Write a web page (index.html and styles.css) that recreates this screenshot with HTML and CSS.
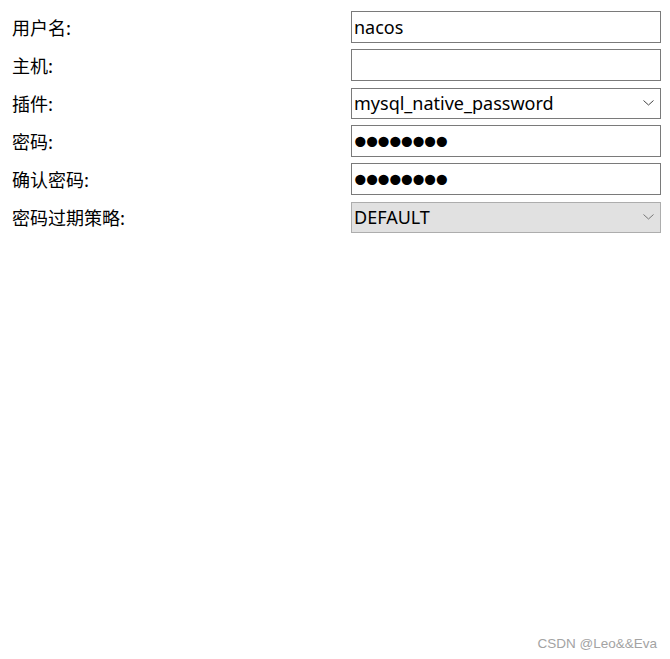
FILE: index.html
```html
<!DOCTYPE html>
<html lang="zh-CN">
<head>
    <meta charset="UTF-8">
    <meta name="viewport" content="width=device-width, initial-scale=1.0">
    <title>用户账户</title>
    <link rel="stylesheet" href="styles.css">
</head>
<body>
    <div class="page">
        <form class="account-form">
            <label class="label" for="user">用户名:</label>
            <input class="field" id="user" type="text" value="nacos">

            <label class="label" for="host">主机:</label>
            <input class="field" id="host" type="text" value="">

            <label class="label" for="plugin">插件:</label>
            <div class="select-wrap">
                <select class="field select" id="plugin">
                    <option>mysql_native_password</option>
                    <option>caching_sha2_password</option>
                </select>
                <svg class="chevron" width="11" height="6" viewBox="0 0 11 6"><path d="M0.5 0.5 L5.5 5 L10.5 0.5" fill="none" stroke="#444" stroke-width="1"/></svg>
            </div>

            <label class="label" for="pwd">密码:</label>
            <input class="field pwd" id="pwd" type="password" value="12345678">

            <label class="label" for="pwd2">确认密码:</label>
            <input class="field pwd" id="pwd2" type="password" value="12345678">

            <label class="label" for="expire">密码过期策略:</label>
            <div class="select-wrap">
                <select class="field select disabled" id="expire" disabled>
                    <option>DEFAULT</option>
                </select>
                <svg class="chevron" width="11" height="6" viewBox="0 0 11 6"><path d="M0.5 0.5 L5.5 5 L10.5 0.5" fill="none" stroke="#777" stroke-width="1"/></svg>
            </div>
        </form>

        <div class="watermark">CSDN @Leo&amp;&amp;Eva</div>
    </div>
</body>
</html>
```

FILE: styles.css
```css
html, body { margin: 0; padding: 0; background: #fff; }
body { font-family: "Noto Sans", "Noto Sans CJK SC", sans-serif; color: #000; }

.page { height: 659px; display: flex; flex-direction: column; box-sizing: border-box; padding: 11px 9px 8px 12px; }

.account-form { display: grid; grid-template-columns: 339px 310px; row-gap: 6px; align-items: center; }

.label { font-family: "Noto Sans CJK SC", sans-serif; font-size: 18px; line-height: 32px; }

.field { box-sizing: border-box; width: 310px; height: 32px; margin: 0; padding: 0 2px; border: 1px solid #7a7a7a; border-radius: 0; background: #fff; font-family: "Noto Sans", "Open Sans", sans-serif; font-size: 18px; color: #000; outline: none; }

.select-wrap { position: relative; width: 310px; height: 31px; }
.select { height: 31px; appearance: none; -webkit-appearance: none; padding-left: 2px; }
.select.disabled { background: #e1e1e1; border-color: #adadad; color: #000; opacity: 1; }
.chevron { position: absolute; right: 7px; top: 12px; pointer-events: none; }

.pwd { padding-top: 4px; font-family: "DejaVu Sans", sans-serif; font-size: 35px; letter-spacing: -9px; text-indent: -4px; -webkit-text-security: disc; }

.watermark { margin-top: auto; text-align: right; font-family: "Liberation Sans", Arial, sans-serif; font-size: 13.5px; color: #a3a3a3; padding-right: 4px; }
```
